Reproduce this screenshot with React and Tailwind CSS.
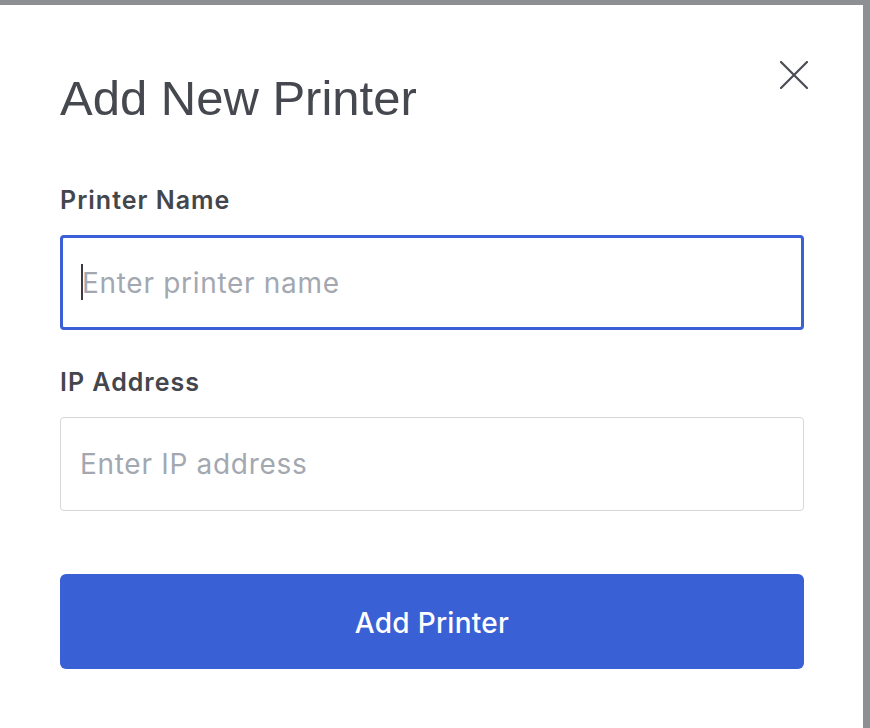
import React from "react";

const PrinterField = ({ label, placeholder, focused, className }) => (
  <div className={className}>
    <label className="block text-[25px] leading-[28px] font-semibold tracking-[0.04em] text-[#44464d] font-['Inter',sans-serif]">
      {label}
    </label>
    <div className="relative mt-[21px]">
      <input
        type="text"
        placeholder={placeholder}
        className={
          focused
            ? "w-full h-[95px] rounded-[4px] border-[3px] border-[#3b60d6] pl-[19px] text-[28px] tracking-[0.025em] text-[#44464d] placeholder:text-[#a3a8b0] outline-none font-['Inter',sans-serif]"
            : "w-full h-[94px] rounded-[4px] border border-[#d5d7db] pl-[19px] text-[28px] tracking-[0.025em] text-[#44464d] placeholder:text-[#a3a8b0] outline-none font-['Inter',sans-serif]"
        }
      />
      {focused && (
        <span className="absolute left-[21px] top-[29px] w-[2px] h-[36px] bg-[#3a3c42]" />
      )}
    </div>
  </div>
);

export default function App() {
  return (
    <div className="min-h-[728px] bg-[#8e8f93] pt-[5px] flex">
      <div className="relative w-[863px] min-h-[723px] bg-white pl-[60px] pt-[69px]">
        <button
          type="button"
          className="absolute left-[776px] top-[52px] w-[36px] h-[36px] flex items-center justify-center"
        >
          <svg width="28" height="28" viewBox="0 0 28 28" fill="none">
            <path
              d="M1 1L27 27M27 1L1 27"
              stroke="#4a4c54"
              strokeWidth="2.2"
              strokeLinecap="round"
            />
          </svg>
        </button>

        <h1 className="text-[49px] leading-[48px] font-normal text-[#46484f] font-['Liberation_Sans',sans-serif]">
          Add New Printer
        </h1>

        <div className="w-[744px]">
          <PrinterField
            className="mt-[64px]"
            label="Printer Name"
            placeholder="Enter printer name"
            focused
          />
          <PrinterField
            className="mt-[38px]"
            label="IP Address"
            placeholder="Enter IP address"
          />

          <button
            type="button"
            className="mt-[63px] w-full h-[95px] rounded-[6px] bg-[#3a60d5] pt-[3px] text-white text-[28px] tracking-[0.01em] font-medium font-['Inter',sans-serif]"
          >
            Add Printer
          </button>
        </div>
      </div>
    </div>
  );
}
